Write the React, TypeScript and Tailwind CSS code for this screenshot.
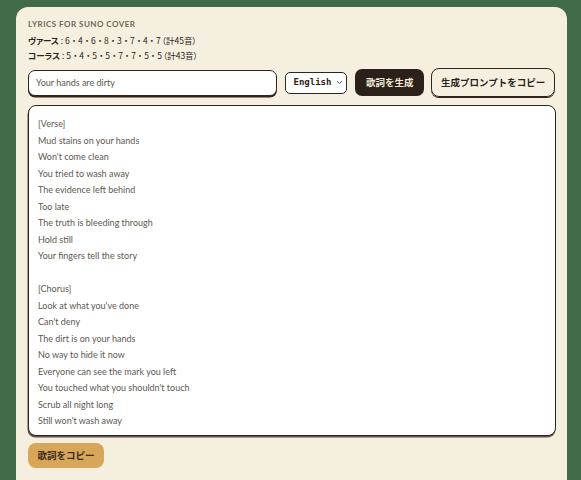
import React from "react";

const lyrics = `[Verse]
Mud stains on your hands
Won't come clean
You tried to wash away
The evidence left behind
Too late
The truth is bleeding through
Hold still
Your fingers tell the story

[Chorus]
Look at what you've done
Can't deny
The dirt is on your hands
No way to hide it now
Everyone can see the mark you left
You touched what you shouldn't touch
Scrub all night long
Still won't wash away`;

function Counts({ nums }: { nums: number[] }) {
  return (
    <>
      {nums.map((n, i) => (
        <React.Fragment key={i}>
          {i > 0 && <span className="mx-[2px]">・</span>}
          {n}
        </React.Fragment>
      ))}
    </>
  );
}

export default function App() {
  return (
    <div className="w-[581px] h-[480px] bg-[#416b48] overflow-hidden pt-[7px] pl-[16px]">
      <div className="w-[551px] h-[520px] bg-[#f5efdf] rounded-[12px] px-[12px] pt-[11px]">
        <div className="font-['Lato','Noto_Sans',sans-serif] text-[8px] font-bold tracking-[0.06em] text-[#6e665a] leading-[12px]">
          LYRICS FOR SUNO COVER
        </div>
        <div className="mt-[3px] font-['Noto_Sans_CJK_JP','Noto_Sans',sans-serif] [font-feature-settings:'palt'] text-[8.5px] text-[#2a231c] leading-[15px]">
          <div>
            <span className="font-bold">ヴァース</span> : <Counts nums={[6, 4, 6, 8, 3, 7, 4, 7]} />
            <span className="ml-[1px]">（計45音）</span>
          </div>
          <div>
            <span className="font-bold">コーラス</span> : <Counts nums={[5, 4, 5, 5, 7, 7, 5, 5]} />
            <span className="ml-[1px]">（計43音）</span>
          </div>
        </div>
        <div className="mt-[5px] flex items-center h-[29px]">
          <div className="w-[249px] h-[26px] bg-white border-[1.5px] border-[#2e261e] rounded-[7px] shadow-[0_1.5px_0_#2e261e] flex items-center px-[7px] font-['Lato','Noto_Sans',sans-serif] text-[9px] text-[#5b554c]">
            Your hands are dirty
          </div>
          <div className="ml-[8px] w-[63px] h-[22px] bg-white border-[1.5px] border-[#2e261e] rounded-[5px] flex items-center pl-[8px] font-['DejaVu_Sans_Mono',monospace] text-[9px] font-bold text-[#2a231c]">
            English
            <svg className="ml-[5px]" width="7" height="5" viewBox="0 0 7 5">
              <path d="M1 1l2.5 2.5L6 1" fill="none" stroke="#555" strokeWidth="1" />
            </svg>
          </div>
          <div className="ml-[8px] w-[69px] h-[27px] bg-[#2b2119] rounded-[7px] flex items-center justify-center font-['Noto_Sans_CJK_JP',sans-serif] text-[9.5px] font-bold text-[#f1ead8]">
            歌詞を生成
          </div>
          <div className="ml-[7px] w-[124px] h-[29px] border-[1.5px] border-[#2e261e] rounded-[8px] flex items-center justify-center font-['Noto_Sans_CJK_JP',sans-serif] text-[9.5px] font-bold text-[#2a231c] shadow-[0_1px_0_#2e261e]">
            生成プロンプトをコピー
          </div>
        </div>
        <div className="mt-[8px] w-[528px] h-[331px] bg-white border-[1.5px] border-[#2e261e] rounded-[8px] shadow-[-0.5px_1.5px_0_#5e554a] px-[9px] pt-[10px] font-['Lato','Noto_Sans',sans-serif] text-[9px] leading-[16.5px] text-[#5e5850] whitespace-pre">
          {lyrics}
        </div>
        <div className="mt-[7px] w-[76px] h-[25px] bg-[#d8a659] rounded-[8px] flex items-center justify-center font-['Noto_Sans_CJK_JP',sans-serif] text-[9.5px] font-bold text-[#3a2c1c]">
          歌詞をコピー
        </div>
      </div>
    </div>
  );
}
